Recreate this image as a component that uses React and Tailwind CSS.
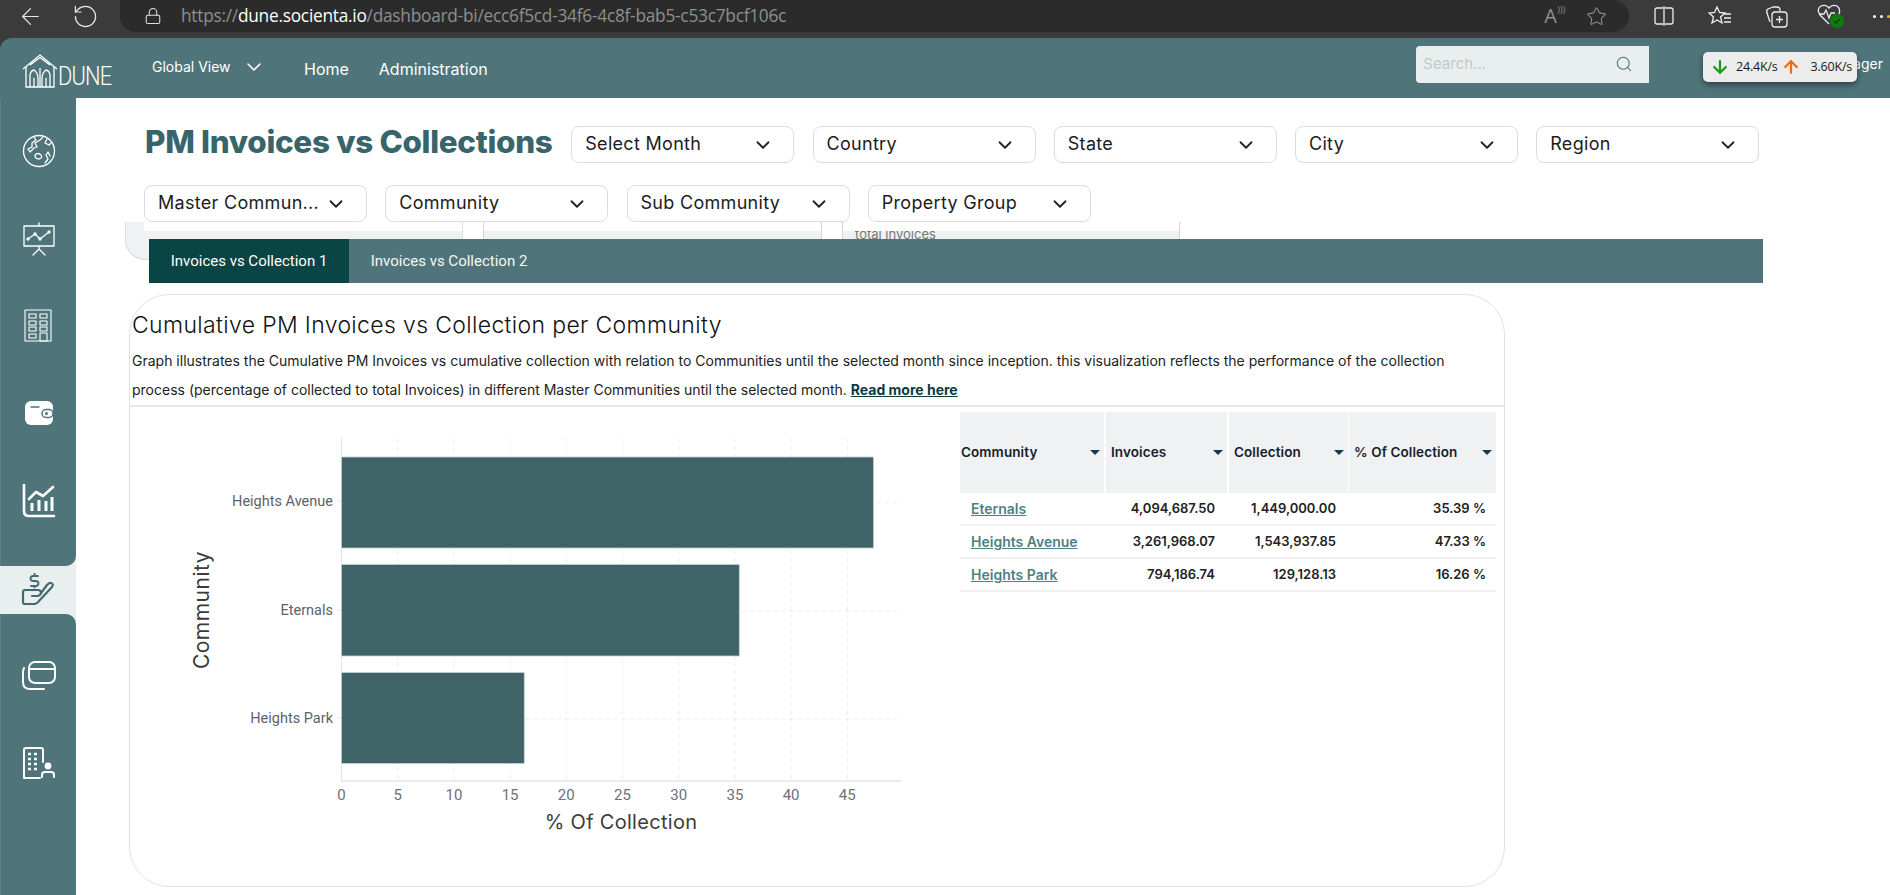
import React from "react";
import { ArrowLeft, RotateCw, Lock, Star, Search, ChevronDown } from "lucide-react";

const TEAL = "#4f757b";

function Logo() {
  return (
    <div className="flex items-end text-white w-[91px]">
      <svg width="37" height="34" viewBox="0 0 37 34" fill="none" stroke="currentColor" strokeWidth="1.3" className="shrink-0">
        <path d="M1 15 L18 1 L35 15 M4 13 V33 H32 V13 M8 11 L18 3.5 L28 11" />
        <path d="M8 33 V22 Q8 17 12 16 Q16 19 16 24 V33 M20 33 V24 Q20 19 24 16 Q28 17 28 22 V33 M12 33 V24 M24 33 V24 M18 33 V14" />
      </svg>
      <span className="font-[Roboto,sans-serif] font-light text-[26px] leading-[24px] tracking-[-1px] ml-[-1px] scale-x-[0.84] origin-left">DUNE</span>
    </div>
  );
}

function Select({ label }) {
  return (
    <div className="w-[223px] h-[37px] shrink-0 flex items-center justify-between bg-white border border-[#dcdcdc] rounded-[8px] pl-[13px] pr-[19px] text-[18px] tracking-[0.3px] text-[#1c1c1c]">
      <span className="whitespace-nowrap mt-[-2px]">{label}</span>
      <ChevronDown size={22} strokeWidth={2} className="shrink-0 text-[#222]" />
    </div>
  );
}

const iconProps = { width: 34, height: 34, viewBox: "0 0 34 34", fill: "none", stroke: "currentColor", strokeWidth: 1.3, strokeLinecap: "round", strokeLinejoin: "round" };

const SideIcons = [
  <svg {...iconProps} key="globe">
    <circle cx="17" cy="17" r="15.5" />
    <path d="M12 3 L14 6 L10 9 L10 13 L6 15 L8 18 L12 14 L15 13 L13 9 L18 6 L21 3 M25 5 L23 9 L27 11 L29 9 M28 22 L26 18 L24 21 L26 25 L23 29 M13 21 Q16 18 19 21 Q21 24 17 25 Q13 25 13 21 Z" />
  </svg>,
  <svg {...iconProps} key="pres">
    <path d="M17 1 V4 M2 4 H32 V24 H2 Z M17 24 V27 M17 27 L11 33 M17 27 L23 33" />
    <path d="M6 17 L13 12 L18 17 L27 10" />
    <circle cx="6" cy="17" r="1" fill="currentColor" /><circle cx="13" cy="12" r="1" fill="currentColor" /><circle cx="18" cy="17" r="1" fill="currentColor" /><circle cx="27" cy="10" r="1" fill="currentColor" />
  </svg>,
  <svg {...iconProps} key="bld" strokeWidth={1.1}>
    <path d="M3 1 H29 V32 H3 Z" />
    <path d="M7 5 H14 V9 H7 Z M18 5 H25 V9 H18 Z M7 12 H14 V16 H7 Z M18 12 H25 V16 H18 Z M7 18 H14 V22 H7 Z M18 18 H25 V22 H18 Z M7 25 H14 V29 H7 Z M18 24 H25 V32 H18 Z" />
  </svg>,
  <svg width="28" height="24" viewBox="0 0 28 24" key="wallet">
    <rect x="0" y="0" width="28" height="24" rx="6" fill="#fff" />
    <path d="M6 6 H14" stroke={TEAL} strokeWidth="1.4" strokeLinecap="round" />
    <rect x="17" y="8.5" width="11" height="8" rx="4" fill="#fff" stroke={TEAL} strokeWidth="1.5" />
    <circle cx="21.5" cy="12.5" r="1.5" fill={TEAL} />
  </svg>,
  <svg {...iconProps} key="chart" strokeWidth={2.6}>
    <path d="M2 1 V27 Q2 32 7 32 H32" />
    <path d="M7 15 L14 8 L21 12 L31 3" />
    <path d="M10 27 V19 M17 27 V16 M24 27 V17 M30 27 V13" strokeWidth={3} strokeLinecap="butt" />
  </svg>,
  <svg {...iconProps} key="hand" stroke="#46696f" strokeWidth={2.2}>
    <path d="M17 3 H12.5 Q9.5 3 9.5 5.5 Q9.5 8 12.5 8 H14.5 Q17.5 8 17.5 10.5 Q17.5 13 14.5 13 H10 M13.5 0.5 V2 M13.5 13 V14.5" strokeWidth={1.8} />
    <path d="M9 17 H4 Q2 17 2 19 V29 Q2 31 4 31 H13 Q16 31 18 28 L31 14 Q33 11 30 10 Q28 9.5 26 12 L20 20 Q19 23 16 23 H11" />
    <path d="M9 17 H17 Q20 17 20 20" />
  </svg>,
  <svg {...iconProps} key="cards" strokeWidth={2}>
    <rect x="7" y="2" width="26" height="21" rx="6" />
    <path d="M7 9 H33" />
    <path d="M2 8 Q1 10 1 13 V22 Q1 29 8 29 H22" />
  </svg>,
  <svg {...iconProps} key="bu" strokeWidth={2}>
    <path d="M2 32 V4 Q2 2 4 2 H19 Q21 2 21 4 V16 M2 32 H18" />
    <path d="M6 8 H9 M12 8 H15 M6 13 H9 M12 13 H15 M6 18 H9 M12 18 H15 M6 23 H9 M12 23 H15" strokeWidth={2.6} strokeLinecap="butt" />
    <circle cx="26" cy="20" r="3.4" fill="currentColor" stroke="none" />
    <path d="M20 31 V29 Q20 26 23 26 H29 Q32 26 32 29 V31" />
  </svg>,
];

function Sidebar() {
  return (
    <aside className="w-[76px] shrink-0 flex flex-col text-white bg-[#e9eeef]">
      <div className="bg-[#4f757b] h-[468px] rounded-br-[10px] border-l border-[#5f7f82] flex flex-col items-center">
        <div className="mt-[36px] h-[34px] flex items-center">{SideIcons[0]}</div>
        <div className="mt-[54px] h-[34px] flex items-center">{SideIcons[1]}</div>
        <div className="mt-[53px] h-[34px] flex items-center">{SideIcons[2]}</div>
        <div className="mt-[53px] h-[34px] flex items-center">{SideIcons[3]}</div>
        <div className="mt-[54px] h-[34px] flex items-center">{SideIcons[4]}</div>
      </div>
      <div className="bg-[#e9eeef] h-[48px] flex items-center justify-center text-[#46696f]">{SideIcons[5]}</div>
      <div className="bg-[#4f757b] flex-1 rounded-tr-[10px] border-l border-[#5f7f82] flex flex-col items-center">
        <div className="mt-[46px] h-[34px] flex items-center">{SideIcons[6]}</div>
        <div className="mt-[52px] h-[34px] flex items-center">{SideIcons[7]}</div>
      </div>
    </aside>
  );
}

function Chart() {
  const x = (v) => 341.5 + v * 11.24;
  const ticks = [0, 5, 10, 15, 20, 25, 30, 35, 40, 45];
  const bars = [
    { n: "Heights Avenue", v: 47.33, y: 457, h: 91, c: 501 },
    { n: "Eternals", v: 35.39, y: 564.5, h: 91.5, c: 610 },
    { n: "Heights Park", v: 16.26, y: 672.5, h: 91, c: 718 },
  ];
  const tf = { fontFamily: "Roboto, sans-serif" };
  return (
    <svg width="820" height="480" viewBox="130 407 820 480" className="shrink-0">
      {ticks.slice(1).map((t) => (
        <line key={t} x1={x(t)} x2={x(t)} y1="439" y2="780" stroke="#ececf1" strokeDasharray="4 4" />
      ))}
      {bars.map((b) => (
        <line key={b.n} x1="341" x2="901" y1={b.c + 1} y2={b.c + 1} stroke="#ececf1" strokeDasharray="4 4" />
      ))}
      <line x1="341.5" x2="341.5" y1="438" y2="781" stroke="#e2e4ee" strokeWidth="1.2" />
      <line x1="341" x2="901" y1="781" y2="781" stroke="#e2e4ee" strokeWidth="1.5" />
      {bars.map((b) => (
        <g key={b.n}>
          <rect x="341.5" y={b.y} width={b.v * 11.24} height={b.h} fill="#3f6366" stroke="#c3d0d3" strokeWidth="0.8" />
          <line x1="337" x2="341" y1={b.c} y2={b.c} stroke="#e2e4ee" />
          <text x="333" y={b.c + 5} textAnchor="end" fontSize="14.5" fill="#5d626b" style={tf}>{b.n}</text>
        </g>
      ))}
      {ticks.map((t) => (
        <text key={t} x={x(t)} y="800" textAnchor="middle" fontSize="15" fill="#6d717a" style={tf}>{t}</text>
      ))}
      <text x="621" y="829" textAnchor="middle" fontSize="20" letterSpacing="0.3" fill="#3b3b3b">% Of Collection</text>
      <text transform="translate(209 610) rotate(-90)" textAnchor="middle" fontSize="21" letterSpacing="0.5" fill="#3b3b3b">Community</text>
    </svg>
  );
}

const rows = [
  ["Eternals", "4,094,687.50", "1,449,000.00", "35.39 %"],
  ["Heights Avenue", "3,261,968.07", "1,543,937.85", "47.33 %"],
  ["Heights Park", "794,186.74", "129,128.13", "16.26 %"],
];

const cols = "grid grid-cols-[144px_2px_121px_2px_119px_1px_147px] w-[536px]";

function Caret() {
  return <span className="w-0 h-0 border-l-[5px] border-r-[5px] border-t-[5px] border-l-transparent border-r-transparent border-t-[#143a52]" />;
}

function DataTable() {
  const heads = ["Community", "Invoices", "Collection", "% Of Collection"];
  return (
    <div className="w-[536px] mt-[5px] ml-[10px]">
      <div className={cols + " h-[81px]"}>
        {heads.map((h, i) => (
          <React.Fragment key={h}>
            {i > 0 && <div />}
            <div className={"bg-[#f0f1f3] flex items-center justify-between text-[13.5px] tracking-[0.1px] font-semibold text-[#15202b] pr-[4px] " + (i === 0 ? "pl-[1px]" : "pl-[5px]")}>
              <span>{h}</span>
              <Caret />
            </div>
          </React.Fragment>
        ))}
      </div>
      {rows.map((r) => (
        <div key={r[0]} className={cols + " h-[33px] items-center border-b-2 border-[#f0f1f3] text-[13px] font-semibold text-[#222]"}>
          <a className="pl-[11px] text-[14px] text-[#4f8085] underline whitespace-nowrap">{r[0]}</a>
          <div />
          <div className="text-right pr-[12px]">{r[1]}</div>
          <div />
          <div className="text-right pr-[12px]">{r[2]}</div>
          <div />
          <div className="text-right pr-[10px]">{r[3]}</div>
        </div>
      ))}
    </div>
  );
}

export default function App() {
  return (
    <div className="relative w-[1890px] h-[895px] overflow-hidden flex flex-col bg-[#3b3b3b] font-[Inter,sans-serif]">
      {/* browser chrome */}
      <div className="h-[38px] shrink-0 flex items-start text-[#e8e8e8]">
        <div className="w-[120px] shrink-0 h-[32px] flex items-center pl-[17px] gap-[28px]">
          <ArrowLeft size={27} strokeWidth={1.1} />
          <RotateCw size={27} strokeWidth={1.1} className="-scale-y-100 rotate-[180deg]" />
        </div>
        <div className="w-[1509px] shrink-0 h-[32px] bg-[#2b2b2b] rounded-b-[16px] rounded-r-[16px] flex items-center pl-[24px] pr-[22px]">
          <Lock size={18} strokeWidth={1.4} className="text-[#ddd]" />
          <span className="ml-[19px] font-['Open_Sans',sans-serif] text-[17.3px] text-[#8f8f8f] tracking-[-0.25px] whitespace-nowrap">
            https://<span className="text-white">dune.socienta.io</span>/dashboard-bi/ecc6f5cd-34f6-4c8f-bab5-c53c7bcf106c
          </span>
          <div className="ml-auto flex items-center gap-[29px] text-[#8f8f8f]">
            <span className="relative font-['Open_Sans',sans-serif] text-[20px] leading-none">A<span className="absolute left-[13px] top-[-1px] text-[9px]">)))</span></span>
            <Star size={21} strokeWidth={1.2} />
          </div>
        </div>
        <div className="flex items-center h-[32px] ml-[24px] gap-[33px]">
          <svg width="22" height="22" viewBox="0 0 22 22" fill="none" stroke="#eee" strokeWidth="1.3"><path d="M10 3 H4 Q2 3 2 5 V17 Q2 19 4 19 H10 M12 3 H18 Q20 3 20 5 V17 Q20 19 18 19 H12 M11 1 V21" /></svg>
          <svg width="24" height="22" viewBox="0 0 24 22" fill="none" stroke="#eee" strokeWidth="1.3"><path d="M9 2 L11.5 7.5 L17 8 L12.5 12 L14 18 L9 15 L4 18 L5.5 12 L1 8 L6.5 7.5 Z M16 9 H23 M16 13 H23 M16 17 H23" /></svg>
          <svg width="24" height="24" viewBox="0 0 24 24" fill="none" stroke="#eee" strokeWidth="1.3"><path d="M8 3 L3 5 Q1 6 2 9 L5 18" /><path d="M8 3 H12 Q15 3 15 6 V7" /><rect x="7" y="8" width="15" height="15" rx="3" /><path d="M14.5 12 V19 M11 15.5 H18" /></svg>
          <svg width="28" height="26" viewBox="0 0 28 26" fill="none" stroke="#eee" strokeWidth="1.3" className="ml-[-6px]"><path d="M13 21 L4 12 Q0 6 5 3 Q10 1 13 5 Q16 1 21 3 Q25 6 23 11" /><path d="M3 11 H8 L10 7 L13 15 L15 10 H19" /><circle cx="21" cy="18" r="7" fill="#107c10" stroke="none" /><path d="M18 18 L20 20 L24 16" stroke="#143a14" /></svg>
          <span className="flex gap-[4px] ml-[-4px]"><i className="w-[3px] h-[3px] rounded-full bg-white" /><i className="w-[3px] h-[3px] rounded-full bg-white" /><i className="w-[3px] h-[3px] rounded-full bg-[#f0b429]" /></span>
        </div>
      </div>

      {/* app header */}
      <header className="h-[60px] shrink-0 bg-[#4f757b] rounded-tl-[12px] flex items-center text-white pl-[22px]">
        <div className="mt-[5px]"><Logo /></div>
        <div className="ml-[39px] flex items-center mt-[-4px]">
          <span className="text-[14px] w-[78px] whitespace-nowrap">Global View</span>
          <ChevronDown size={24} strokeWidth={1.6} className="ml-[12px] mt-[1px]" />
        </div>
        <span className="ml-[38px] text-[16px] mt-[1px]">Home</span>
        <span className="ml-[30px] text-[16px] mt-[1px]">Administration</span>
        <div className="ml-auto w-[233px] h-[37px] mt-[-8px] bg-[#e9eeef] rounded-l-[4px] flex items-center justify-between pl-[7px] pr-[16px]">
          <span className="text-[#c4c8c9] text-[15px]">Search...</span>
          <Search size={18} strokeWidth={1.4} className="text-[#4f757b]" />
        </div>
        <span className="ml-[175px] mr-[7px] mt-[-9px] text-[14px] whitespace-nowrap">Manager</span>
      </header>

      {/* network overlay */}
      <div className="absolute left-[1703px] top-[52px] w-[154px] h-[30px] bg-[#ececec] rounded-[5px] shadow-[0_3px_6px_rgba(0,0,0,0.45)] flex items-center font-['Open_Sans',sans-serif] text-[12.5px] text-[#1a1a1a] pl-[7px] z-20">
        <ArrowLeft size={20} strokeWidth={2.6} className="-rotate-90 text-[#139a13]" />
        <span className="ml-[6px] tracking-[-0.2px]">24.4K/s</span>
        <ArrowLeft size={20} strokeWidth={2.6} className="rotate-90 text-[#f26a0c] ml-[3px]" />
        <span className="ml-[10px] tracking-[-0.2px]">3.60K/s</span>
      </div>

      <div className="flex-1 flex min-h-0 bg-[#4f757b]">
        <Sidebar />
        <main className="flex-1 bg-white min-w-0 overflow-hidden">
          {/* title & filters */}
          <div className="pl-[68px] pt-[28px] flex flex-wrap gap-x-[18.25px] gap-y-[22px] w-[1720px]">
            <h1 className="w-[409px] shrink-0 pl-[1px] text-[31.4px] leading-[33px] font-extrabold text-[#38646b] tracking-[-0.3px] whitespace-nowrap">PM Invoices vs Collections</h1>
            {["Select Month", "Country", "State", "City", "Region"].map((l) => <Select key={l} label={l} />)}
            {["Master Commun...", "Community", "Sub Community", "Property Group"].map((l) => <Select key={l} label={l} />)}
          </div>

          {/* remnants of scrolled content */}
          <div className="h-[17px] flex pl-[49px] items-start">
            <div className="w-[338px] h-[38px] shrink-0 bg-[#f0f1f3] border-l border-b border-r border-[#dcdde0] rounded-bl-[20px] overflow-hidden">
              <div className="ml-[18px] h-[9px] bg-white" />
            </div>
            <div className="w-[20px] shrink-0" />
            <div className="w-[339px] h-[17px] shrink-0 flex flex-col border-l border-r border-[#d5d5d5]">
              <div className="h-[9px] bg-white" />
              <div className="h-[8px] bg-[#f0f1f3]" />
            </div>
            <div className="w-[20px] shrink-0" />
            <div className="w-[338px] h-[17px] shrink-0 flex flex-col border-l border-r border-[#d5d5d5]">
              <div className="h-[9px] bg-white" />
              <div className="h-[8px] bg-[#f0f1f3] overflow-hidden pl-[12px] text-[13px] leading-[7px] text-[#777]">
                <span className="relative block leading-[7px]">total invoices</span>
              </div>
            </div>
          </div>

          {/* tabs */}
          <div className="relative z-10 ml-[73px] w-[1614px] h-[44px] bg-[#4f757b] flex font-[Roboto,sans-serif] text-[15px] text-white">
            <div className="w-[200px] bg-[#0a4545] flex items-center justify-center">Invoices vs Collection 1</div>
            <div className="w-[200px] flex items-center justify-center opacity-95">Invoices vs Collection 2</div>
          </div>

          {/* card */}
          <section className="ml-[53px] mt-[11px] w-[1376px] h-[593px] border border-[#e2e2e2] rounded-[40px] overflow-hidden">
            <h2 className="pl-[2px] pt-[16px] text-[23px] leading-[28px] font-light tracking-[0.35px] text-[#111]">Cumulative PM Invoices vs Collection per Community</h2>
            <p className="pl-[2px] pr-[20px] mt-[7px] text-[14px] leading-[29px] text-[#222]">
              Graph illustrates the Cumulative PM Invoices vs cumulative collection with relation to Communities until the selected month since inception. this visualization reflects the performance of the collection process (percentage of collected to total Invoices) in different Master Communities until the selected month. <a className="font-bold underline text-[#0b3b3f]">Read more here</a>
            </p>
            <div className="border-t-2 border-[#e6e6e6] mt-[1px] flex">
              <Chart />
              <DataTable />
            </div>
          </section>
        </main>
      </div>
    </div>
  );
}
